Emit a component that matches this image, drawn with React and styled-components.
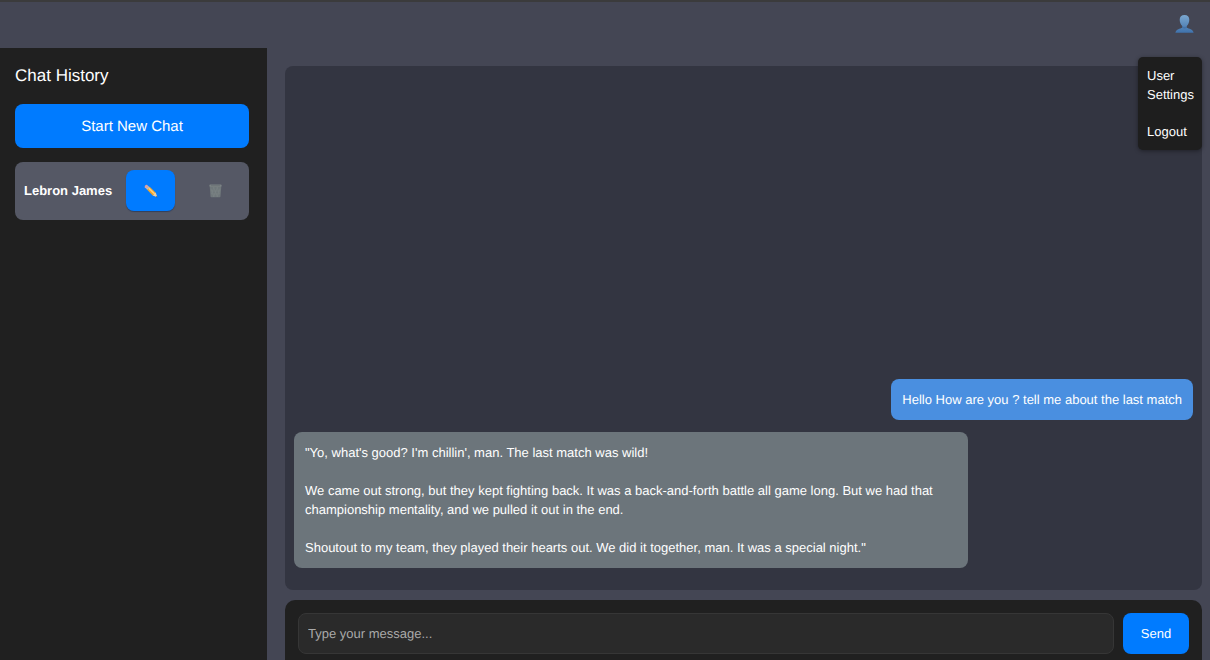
import React, { useState } from 'react';
import styled, { createGlobalStyle } from 'styled-components';

const GlobalStyle = createGlobalStyle`
  *, *::before, *::after { box-sizing: border-box; }
  body {
    margin: 0;
    background: #444654;
    color: #fff;
    font: 13px/19px "Liberation Sans", Arial, sans-serif;
    text-rendering: geometricPrecision;
  }
  button, input { font: inherit; color: inherit; margin: 0; text-rendering: inherit; }
`;

const Page = styled.div`
  display: flex;
  flex-direction: column;
  height: 100vh;
  overflow: hidden;
`;

const Header = styled.header`
  position: relative;
  flex: none;
  display: flex;
  align-items: center;
  justify-content: flex-end;
  height: 48px;
  padding: 0 16px 2px;
  border-top: 2px solid #3b3b3c;
  background: #444654;
`;

const ProfileButton = styled.button`
  display: flex;
  padding: 0;
  border: 0;
  background: none;
  cursor: pointer;
`;

const Menu = styled.nav`
  position: absolute;
  z-index: 2;
  top: 55px;
  right: 8px;
  width: 64px;
  display: flex;
  flex-direction: column;
  gap: 18px;
  padding: 9px;
  border-radius: 5px;
  background: #1e1e1e;
  box-shadow: 0 1px 4px rgba(0, 0, 0, 0.4);
`;

const MenuLink = styled.a`
  color: #fff;
  text-decoration: none;
`;

const Body = styled.div`
  flex: 1;
  min-height: 0;
  display: flex;
`;

const Sidebar = styled.aside`
  flex: none;
  width: 267px;
  padding: 18px 18px 18px 15px;
  background: #202020;
`;

const SidebarTitle = styled.h2`
  margin: 0 0 18px;
  font-size: 17px;
  line-height: 20px;
  font-weight: 400;
`;

const Button = styled.button`
  display: flex;
  align-items: center;
  justify-content: center;
  border: 0;
  border-radius: 8px;
  background: ${(p) => (p.$plain ? 'transparent' : '#007bff')};
  cursor: pointer;
`;

const NewChatButton = styled(Button)`
  width: 100%;
  height: 44px;
  margin-bottom: 14px;
  font-size: 15px;
`;

const ChatRow = styled.div`
  display: flex;
  align-items: center;
  padding: 8px 9px 9px;
  border-radius: 8px;
  background: #555865;
`;

const ChatName = styled.span`
  flex: 1;
  min-width: 0;
  font-weight: 700;
  white-space: nowrap;
`;

const RowButton = styled(Button)`
  flex: none;
  width: 49px;
  height: 41px;
  margin-left: 16px;
  padding: 0;
  box-shadow: ${(p) => (p.$plain ? 'none' : '0 1px 1px rgba(0, 30, 80, 0.4)')};
`;

const Main = styled.main`
  flex: 1;
  min-width: 0;
  display: flex;
  flex-direction: column;
  gap: 10px;
  padding: 18px 8px 0 18px;
`;

const Messages = styled.section`
  flex: 1;
  min-height: 0;
  display: flex;
  flex-direction: column;
  justify-content: flex-end;
  gap: 12px;
  padding: 9px 9px 22px;
  border-radius: 8px;
  background: #333541;
`;

const Bubble = styled.div`
  align-self: ${(p) => (p.$mine ? 'flex-end' : 'flex-start')};
  max-width: 75%;
  padding: 11px;
  border-radius: 8px;
  white-space: pre-wrap;
  background: ${(p) => (p.$mine ? '#4a8fe0' : '#6c757b')};
`;

const Composer = styled.form`
  flex: none;
  display: flex;
  gap: 9px;
  padding: 13px 13px 6px;
  border-radius: 10px 10px 0 0;
  background: #202020;
`;

const MessageInput = styled.input`
  flex: 1;
  min-width: 0;
  height: 41px;
  padding: 0 9px;
  border: 1px solid #363636;
  border-radius: 8px;
  background: #2a2a2a;
  outline: 0;
  &::placeholder { color: #a9a9a9; opacity: 1; }
`;

const SendButton = styled(Button)`
  width: 66px;
  height: 41px;
`;

function PersonIcon() {
  return (
    <svg width="19" height="20" viewBox="0 0 19 20" aria-hidden="true">
      <defs>
        <linearGradient id="person" x1="0" y1="0" x2="0" y2="1">
          <stop offset="0" stopColor="#7ba7cf" />
          <stop offset="1" stopColor="#3f72ac" />
        </linearGradient>
      </defs>
      <path
        d="M9.500 1C6.400 1 4.700 3 4.700 5.800c0 2.300 1 4.900 2.500 6.200v1.700C5.200 14.800 1.100 14.900.4 18.800h18.200c-.7-3.900-4.800-4-6.800-5.100V12c1.500-1.300 2.500-3.900 2.500-6.200C14.300 3 12.600 1 9.500 1z"
        fill="url(#person)"
      />
      <path d="M7.200 12.200c1.300 1 3.300 1 4.600 0v1.500c-1.200 1-3.400 1-4.600 0z" fill="#315f99" opacity=".4" />
    </svg>
  );
}

function PencilIcon() {
  return (
    <svg width="14" height="14" viewBox="0 0 14 14" aria-hidden="true">
      <path d="M.8 3.200C.4 2 1.600.6 2.900.8L4.800 2.500 2.400 5z" fill="#d9a3a5" />
      <path d="m2.200 4.800 2.600-2.600 1.300 1.200-2.700 2.700z" fill="#b9bcc4" />
      <path d="m3.200 5.800 2.700-2.700 5.900 5.600-2.900 3z" fill="#f0a52b" />
      <path d="m4.300 4.700 1-1 6 5.700-1.100 1.100z" fill="#ffd17a" />
      <path d="m8.800 11.600 3-3 1.500 4.700z" fill="#ecd1a8" />
      <path d="m12 13 .9-.9.5 1.300z" fill="#444" />
    </svg>
  );
}

function TrashIcon() {
  return (
    <svg width="13" height="14" viewBox="0 0 13 14" aria-hidden="true">
      <path d="M.6 1 1.500 12.500c0 .5.400.8.900.8h8.200c.5 0 .9-.3.900-.8L12.400 1z" fill="#70787b" />
      <path
        d="M2 4.500 5 13M4.500 3l4 10M8 3l2.500 7M11 4.500 8 13M8.500 3l-4 10M5 3 2.500 10M2 7h9M2.400 10h8.200"
        stroke="#7d8486"
        strokeWidth=".5"
        fill="none"
      />
      <rect x=".5" y=".5" width="12" height="2.200" rx=".6" fill="#7b8284" />
      <path d="M2 1.600h9" stroke="#697074" strokeWidth=".7" />
    </svg>
  );
}

const messages = [
  { mine: true, text: 'Hello How are you ? tell me about the last match' },
  {
    mine: false,
    text: `"Yo, what's good? I'm chillin', man. The last match was wild!

We came out strong, but they kept fighting back. It was a back-and-forth battle all game long. But we had that championship mentality, and we pulled it out in the end.

Shoutout to my team, they played their hearts out. We did it together, man. It was a special night."`,
  },
];

export default function App() {
  const [menuOpen, setMenuOpen] = useState(true);
  const [draft, setDraft] = useState('');

  return (
    <>
      <GlobalStyle />
      <Page>
        <Header>
          <ProfileButton
            type="button"
            aria-label="Profile"
            aria-expanded={menuOpen}
            onClick={() => setMenuOpen(!menuOpen)}
          >
            <PersonIcon />
          </ProfileButton>
          {menuOpen && (
            <Menu>
              <MenuLink href="#settings">User Settings</MenuLink>
              <MenuLink href="#logout">Logout</MenuLink>
            </Menu>
          )}
        </Header>
        <Body>
          <Sidebar>
            <SidebarTitle>Chat History</SidebarTitle>
            <NewChatButton type="button">Start New Chat</NewChatButton>
            <ChatRow>
              <ChatName>Lebron James</ChatName>
              <RowButton type="button" aria-label="Rename chat">
                <PencilIcon />
              </RowButton>
              <RowButton type="button" $plain aria-label="Delete chat">
                <TrashIcon />
              </RowButton>
            </ChatRow>
          </Sidebar>
          <Main>
            <Messages>
              {messages.map((m) => (
                <Bubble key={m.text} $mine={m.mine}>{m.text}</Bubble>
              ))}
            </Messages>
            <Composer onSubmit={(e) => e.preventDefault()}>
              <MessageInput
                type="text"
                aria-label="Message"
                placeholder="Type your message..."
                value={draft}
                onChange={(e) => setDraft(e.target.value)}
              />
              <SendButton type="submit">Send</SendButton>
            </Composer>
          </Main>
        </Body>
      </Page>
    </>
  );
}
